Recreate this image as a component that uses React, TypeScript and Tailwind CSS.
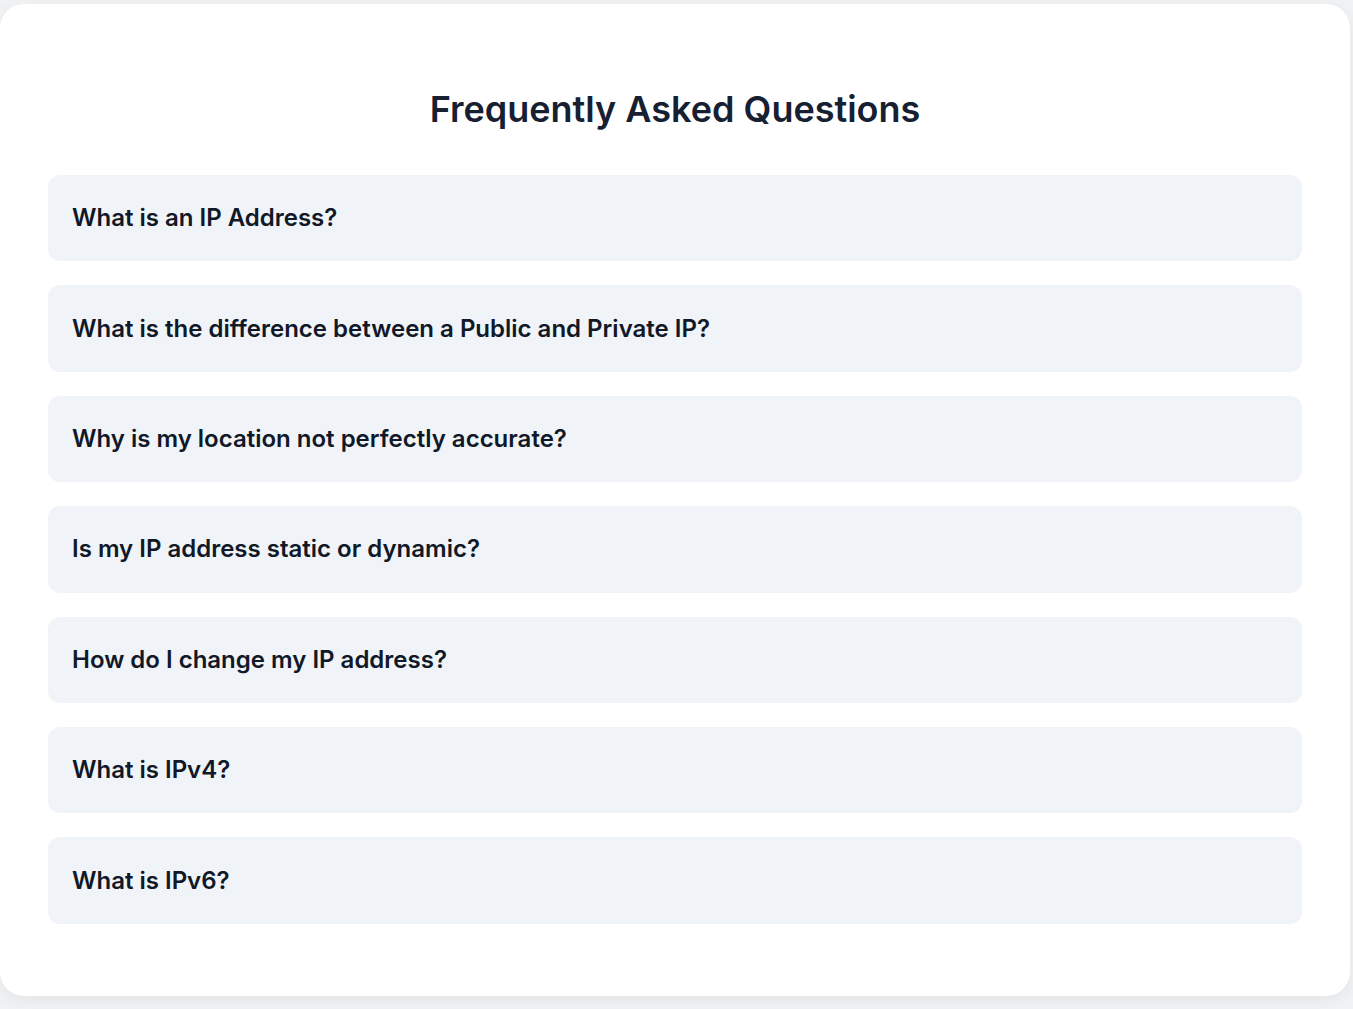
const questions = [
  "What is an IP Address?",
  "What is the difference between a Public and Private IP?",
  "Why is my location not perfectly accurate?",
  "Is my IP address static or dynamic?",
  "How do I change my IP address?",
  "What is IPv4?",
  "What is IPv6?",
];

export default function App() {
  return (
    <div className="min-h-[1009px] bg-[#f1f2f4] pt-[4px] pr-[3px] font-['Inter',sans-serif]">
      <div className="rounded-[24px] bg-white px-12 pt-[85px] pb-[72px] shadow-[0_4px_16px_rgba(0,0,0,0.06)]">
        <h2 className="mb-[46px] text-center text-[36px] leading-[40px] font-semibold text-[#172033]">
          Frequently Asked Questions
        </h2>
        <div className="flex flex-col gap-6">
          {questions.map((q) => (
            <div
              key={q}
              className="flex h-[86.4px] cursor-pointer items-center rounded-xl bg-[#f0f4f8] px-6 text-[24px] font-semibold text-[#111827]"
            >
              <span>{q}</span>
            </div>
          ))}
        </div>
      </div>
    </div>
  );
}
